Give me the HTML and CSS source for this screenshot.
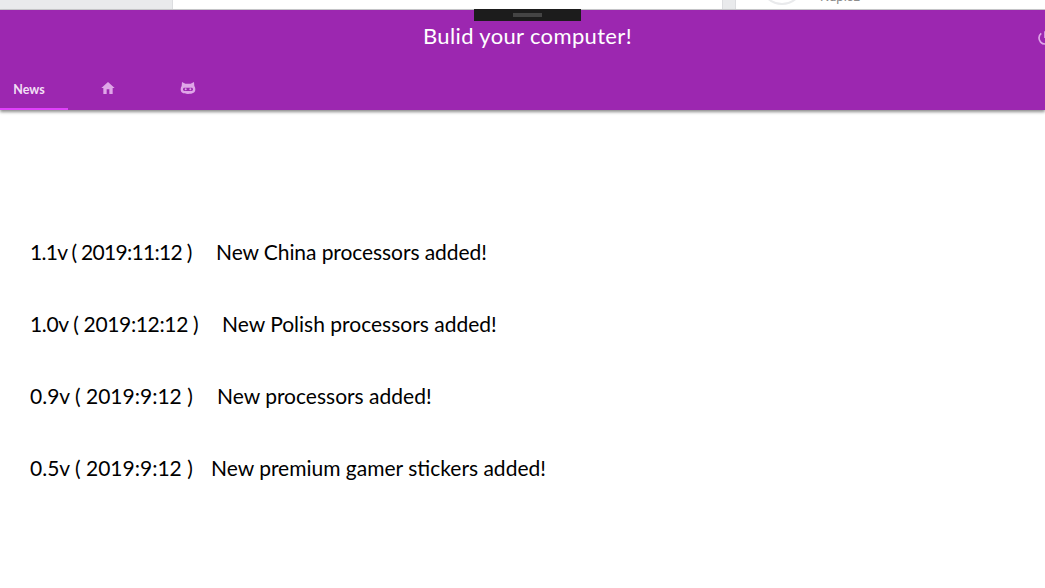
FILE: index.html
```html
<!DOCTYPE html>
<html lang="en">
<head>
    <meta charset="UTF-8">
    <title>Bulid your computer!</title>
    <link rel="stylesheet" href="styles.css">
</head>
<body>
    <div class="behind">
        <div class="behind-side"></div>
        <div class="behind-main"></div>
        <div class="behind-gap"></div>
        <div class="behind-profile">
            <div class="avatar"></div>
            <span class="profile-name">Napisz</span>
        </div>
    </div>
    <header class="toolbar">
        <div class="handle"><div class="handle-grip"></div></div>
        <div class="title-row">
            <h1>Bulid your computer!</h1>
            <svg class="power" viewBox="0 0 24 24" width="18" height="18">
                <path d="M12 3v9M7 5.800a8 8 0 1 0 10 0" fill="none" stroke="#dfa6e8" stroke-width="2.200"/>
            </svg>
        </div>
        <nav class="tabs">
            <a class="tab tab-active">News</a>
            <a class="tab">
                <svg viewBox="0 0 24 24" width="16" height="16"><path d="M10 21v-7h4v7h5v-9h3L12 3 2 12h3v9z" fill="#dfa6e8"/></svg>
            </a>
            <a class="tab">
                <svg viewBox="0 0 24 24" width="16" height="16">
                    <path fill-rule="evenodd" d="M3 3l5 2.500h8L21 3l.5 6c1 1.500 1.500 3 1.500 5 0 5-3.500 7-11 7S1 19 1 14c0-2 .5-3.500 1.500-5zM7 11.500c-1.700 0-2.500 1-2.500 2.500s.8 2.500 2.500 2.500h10c1.700 0 2.500-1 2.500-2.500s-.8-2.500-2.500-2.500z" fill="#dfa6e8"/>
                    <circle cx="8.500" cy="14" r="1.500" fill="#dfa6e8"/>
                    <circle cx="15.500" cy="14" r="1.500" fill="#dfa6e8"/>
                </svg>
            </a>
        </nav>
    </header>
    <main class="news">
        <p class="news-row"><span class="version v1">1.1v ( 2019:11:12 )</span><span class="msg-tight">New China processors added!</span></p>
        <p class="news-row"><span class="version v2">1.0v ( 2019:12:12 )</span><span>New Polish processors added!</span></p>
        <p class="news-row"><span class="version v3">0.9v ( 2019:9:12 )</span><span>New processors added!</span></p>
        <p class="news-row"><span class="version v4">0.5v ( 2019:9:12 )</span><span>New premium gamer stickers added!</span></p>
    </main>
</body>
</html>
```

FILE: styles.css
```css
html, body {
    margin: 0;
    padding: 0;
    height: 100%;
    overflow: hidden;
    background: #fff;
}
body {
    font-family: "Comic Sans MS", "Lato", "Noto Sans", sans-serif;
    color: #000;
}
.behind {
    display: flex;
    height: 9px;
    overflow: hidden;
    background: #fff;
    border-bottom: 1px solid #c9c9cc;
}
.behind-side {
    width: 172px;
    background: #e9eaec;
    border-right: 1px solid #dcdde0;
}
.behind-main {
    width: 549px;
    border-right: 1px solid #dcdde0;
}
.behind-gap {
    width: 12px;
    background: #e9eaec;
    border-right: 1px solid #dcdde0;
}
.behind-profile {
    display: flex;
    gap: 16px;
    padding-left: 24px;
}
.avatar {
    width: 44px;
    height: 44px;
    margin-top: -39px;
    border: 2px solid #e9eaec;
    border-radius: 50%;
    box-sizing: border-box;
}
.profile-name {
    font-family: "Roboto", sans-serif;
    font-size: 13px;
    line-height: 12px;
    margin-top: -9px;
    color: #8d8d8d;
}
.toolbar {
    position: relative;
    height: 100px;
    background: #9c27b0;
    box-shadow: 0 2px 3px rgba(0, 0, 0, 0.45);
    color: #fff;
    display: flex;
    flex-direction: column;
}
.handle {
    position: absolute;
    left: 474px;
    top: -1px;
    width: 107px;
    height: 12px;
    background: #1c1c1c;
    display: flex;
    justify-content: center;
    padding-top: 4px;
    box-sizing: border-box;
}
.handle-grip {
    width: 29px;
    height: 4px;
    background: #444;
}
.title-row {
    position: relative;
    height: 58px;
    display: flex;
    justify-content: center;
}
h1 {
    margin: 8px 0 0 10px;
    font-size: 22px;
    line-height: 35px;
    font-weight: 400;
    letter-spacing: 0.35px;
}
.power {
    position: absolute;
    left: 1036px;
    top: 19px;
}
.tabs {
    display: flex;
    height: 42px;
}
.tab {
    width: 80px;
    box-sizing: border-box;
    display: flex;
    align-items: center;
    justify-content: center;
    padding-bottom: 4px;
    padding-top: 2px;
}
.tab svg {
    display: block;
}
.tab-active {
    width: 68px;
    padding: 3px 10px 0 0;
    font-family: "Lato", sans-serif;
    font-size: 12.500px;
    font-weight: 700;
    color: #f3e0f6;
    border-bottom: 2px solid #e040fb;
}
.news {
    display: flex;
    flex-direction: column;
    gap: 44px;
    padding: 128px 0 0 30px;
}
.news-row {
    display: flex;
    margin: 0;
    height: 28px;
    font-size: 21px;
    line-height: 28px;
}
.version {
    display: block;
}
.msg-tight {
    letter-spacing: -0.08px;
}
.v1 { width: 186px; letter-spacing: -0.7px; }
.v2 { width: 192px; letter-spacing: -0.35px; }
.v3 { width: 187px; }
.v4 { width: 181px; }
```
